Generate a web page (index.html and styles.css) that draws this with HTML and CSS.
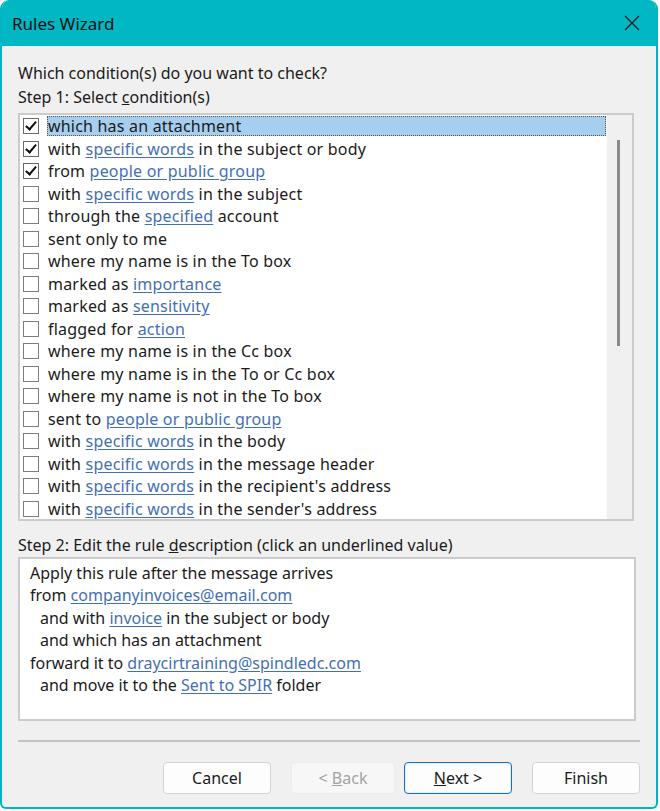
FILE: index.html
```html
<!DOCTYPE html>
<html lang="en">
<head>
<meta charset="utf-8">
<title>Rules Wizard</title>
<link rel="stylesheet" href="styles.css">
</head>
<body>
<div class="window">
  <div class="titlebar">
    <span class="title">Rules Wizard</span>
    <svg class="close" width="16" height="16" viewBox="0 0 16 16"><path d="M1 1 L15 15 M15 1 L1 15" stroke="#1a1a1a" stroke-width="1.2" fill="none"/></svg>
  </div>
  <div class="content">
    <div class="label">Which condition(s) do you want to check?</div>
    <div class="label">Step 1: Select <u>c</u>ondition(s)</div>
    <div class="listbox">
      <div class="rows">
        <div class="row selected"><span class="cb checked"></span><span class="txt">which has an attachment</span></div>
        <div class="row"><span class="cb checked"></span><span class="txt">with <a>specific words</a> in the subject or body</span></div>
        <div class="row"><span class="cb checked"></span><span class="txt">from <a>people or public group</a></span></div>
        <div class="row"><span class="cb"></span><span class="txt">with <a>specific words</a> in the subject</span></div>
        <div class="row"><span class="cb"></span><span class="txt">through the <a>specified</a> account</span></div>
        <div class="row"><span class="cb"></span><span class="txt">sent only to me</span></div>
        <div class="row"><span class="cb"></span><span class="txt">where my name is in the To box</span></div>
        <div class="row"><span class="cb"></span><span class="txt">marked as <a>importance</a></span></div>
        <div class="row"><span class="cb"></span><span class="txt">marked as <a>sensitivity</a></span></div>
        <div class="row"><span class="cb"></span><span class="txt">flagged for <a>action</a></span></div>
        <div class="row"><span class="cb"></span><span class="txt">where my name is in the Cc box</span></div>
        <div class="row"><span class="cb"></span><span class="txt">where my name is in the To or Cc box</span></div>
        <div class="row"><span class="cb"></span><span class="txt">where my name is not in the To box</span></div>
        <div class="row"><span class="cb"></span><span class="txt">sent to <a>people or public group</a></span></div>
        <div class="row"><span class="cb"></span><span class="txt">with <a>specific words</a> in the body</span></div>
        <div class="row"><span class="cb"></span><span class="txt">with <a>specific words</a> in the message header</span></div>
        <div class="row"><span class="cb"></span><span class="txt">with <a>specific words</a> in the recipient's address</span></div>
        <div class="row"><span class="cb"></span><span class="txt">with <a>specific words</a> in the sender's address</span></div>
      </div>
      <div class="scrollbar"><div class="thumb"></div></div>
    </div>
    <div class="label step2">Step 2: Edit the rule <u>d</u>escription (click an underlined value)</div>
    <div class="desc">
      <div class="line">Apply this rule after the message arrives</div>
      <div class="line">from <a>companyinvoices@email.com</a></div>
      <div class="line indent">and with <a>invoice</a> in the subject or body</div>
      <div class="line indent">and which has an attachment</div>
      <div class="line">forward it to <a>draycirtraining@spindledc.com</a></div>
      <div class="line indent">and move it to the <a>Sent to SPIR</a> folder</div>
    </div>
    <div class="separator"></div>
    <div class="buttons">
      <button class="btn">Cancel</button>
      <button class="btn disabled">&lt; <u>B</u>ack</button>
      <button class="btn default"><u>N</u>ext &gt;</button>
      <button class="btn">Finish</button>
    </div>
  </div>
</div>
</body>
</html>
```

FILE: styles.css
```css
html, body {
  margin: 0;
  padding: 0;
  background: #ffffff;
}

body {
  width: 660px;
  height: 811px;
  font-family: "Segoe UI", "Noto Sans", sans-serif;
  font-size: 16px;
  color: #1b1b1b;
}

.window {
  width: 654px;
  height: 807px;
  border: 2px solid #00b5c2;
  border-top: 0;
  border-radius: 9px 9px 6px 6px;
  background: #f0f0f0;
  overflow: hidden;
  display: flex;
  flex-direction: column;
}

.titlebar {
  height: 46px;
  flex: none;
  background: #00b7c3;
  display: flex;
  align-items: center;
  justify-content: space-between;
  padding: 0 16px 0 10px;
}

.title {
  font-size: 17px;
  color: #111;
}

.close {
  display: block;
}

.content {
  flex: 1;
  display: flex;
  flex-direction: column;
  padding: 15px 0 0 16px;
}

.label {
  line-height: 24px;
  height: 24px;
  white-space: nowrap;
}

.listbox {
  margin-top: 4px;
  width: 612px;
  height: 404px;
  border: 2px solid #cbcbcb;
  background: #fff;
  display: flex;
}

.rows {
  flex: 1;
  padding-top: 0;
}

.row {
  height: 22.5px;
  display: flex;
  align-items: center;
  padding-left: 3px;
}

.cb {
  width: 14px;
  height: 14px;
  border: 1px solid #7d7d7d;
  background: #fff;
  margin-right: 8px;
  flex: none;
  position: relative;
}

.cb.checked {
  border-color: #6a6a6a;
}

.cb.checked::after {
  content: "";
  position: absolute;
  left: 4px;
  top: 0px;
  width: 4px;
  height: 9px;
  border-right: 2.5px solid #111;
  border-bottom: 2.5px solid #111;
  transform: rotate(40deg);
}

.txt {
  line-height: 20px;
  padding: 0 1px;
  white-space: nowrap;
  letter-spacing: 0.2px;
}

.row.selected .txt {
  flex: 1;
  background: #a6ceef;
  outline: 1px dotted #555;
  outline-offset: -1px;
}

a {
  color: #4470b2;
  text-decoration: underline;
  text-underline-offset: 2px;
}

.scrollbar {
  width: 25px;
  flex: none;
  background: #f0f0f0;
  border-left: 1px solid #fafafa;
  position: relative;
}

.thumb {
  position: absolute;
  left: 10px;
  top: 25px;
  width: 3px;
  height: 206px;
  background: #8a8a8a;
}

.step2 {
  margin-top: 12px;
}

.desc {
  width: 604px;
  height: 157px;
  border: 2px solid #cbcbcb;
  background: #fff;
  padding: 3px 0 0 10px;
}

.line {
  height: 22.4px;
  line-height: 22.4px;
  white-space: nowrap;
}

.line.indent {
  padding-left: 10px;
}

.separator {
  margin-top: 19px;
  width: 622px;
  height: 0;
  border-top: 2px solid #c3c3c3;
}

.buttons {
  margin-top: 20px;
  display: flex;
  justify-content: flex-end;
  gap: 20px;
  width: 622px;
}

.btn {
  width: 108px;
  height: 32px;
  font-family: inherit;
  font-size: 16px;
  color: #1b1b1b;
  background: #fdfdfd;
  border: 1px solid #d3d3d3;
  border-radius: 4px;
  padding: 0;
}

.btn.disabled {
  background: #f7f7f7;
  border-color: #ececec;
  color: #a3a3a3;
  width: 104px;
  margin-right: -11px;
}

.btn.default {
  border: 1px solid #1a6fc4;
  box-shadow: inset 0 0 0 1px #e6eef8;
}
```
